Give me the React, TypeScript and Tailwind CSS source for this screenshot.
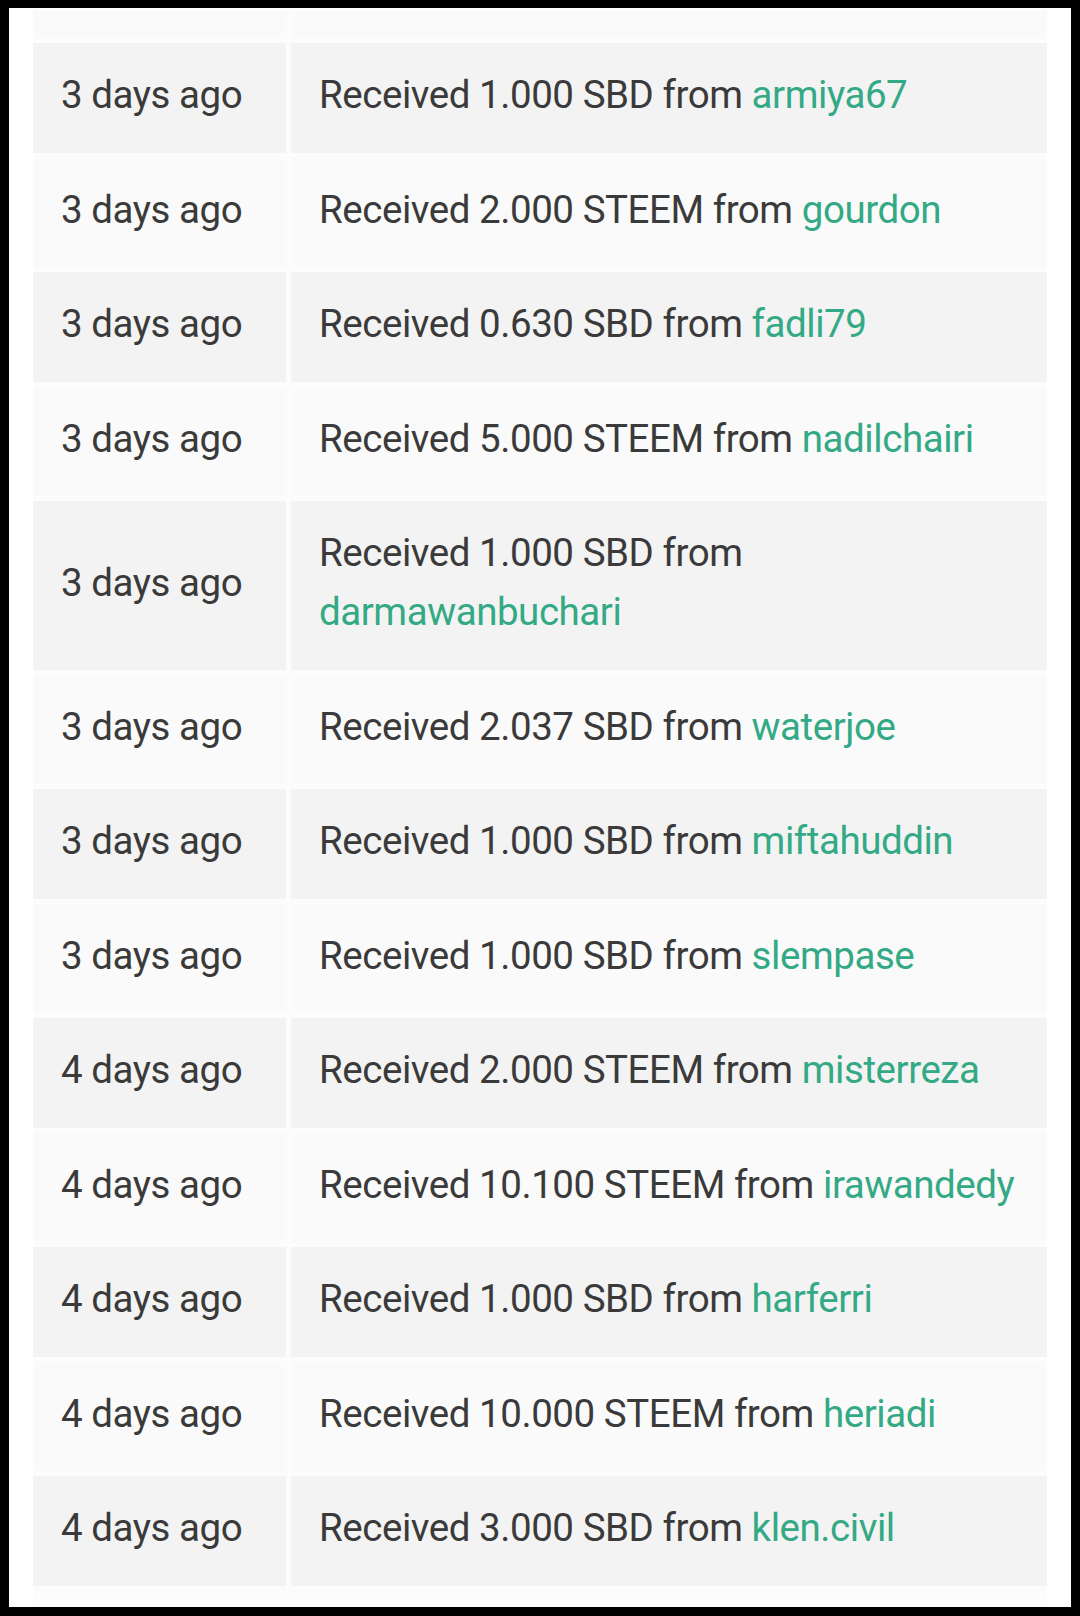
import React from "react";

type Row = { date: string; text: string; user: string; wrap?: boolean };

const rows: Row[] = [
  { date: "3 days ago", text: "Received 1.000 SBD from", user: "armiya67" },
  { date: "3 days ago", text: "Received 2.000 STEEM from", user: "gourdon" },
  { date: "3 days ago", text: "Received 0.630 SBD from", user: "fadli79" },
  { date: "3 days ago", text: "Received 5.000 STEEM from", user: "nadilchairi" },
  { date: "3 days ago", text: "Received 1.000 SBD from", user: "darmawanbuchari", wrap: true },
  { date: "3 days ago", text: "Received 2.037 SBD from", user: "waterjoe" },
  { date: "3 days ago", text: "Received 1.000 SBD from", user: "miftahuddin" },
  { date: "3 days ago", text: "Received 1.000 SBD from", user: "slempase" },
  { date: "4 days ago", text: "Received 2.000 STEEM from", user: "misterreza" },
  { date: "4 days ago", text: "Received 10.100 STEEM from", user: "irawandedy" },
  { date: "4 days ago", text: "Received 1.000 SBD from", user: "harferri" },
  { date: "4 days ago", text: "Received 10.000 STEEM from", user: "heriadi" },
  { date: "4 days ago", text: "Received 3.000 SBD from", user: "klen.civil" },
];

export default function App() {
  return (
    <div
      className="w-[1080px] h-[1616px] bg-black pt-[8px] pl-[9px] overflow-hidden"
      style={{ fontFamily: "Roboto, 'Noto Sans', sans-serif" }}
    >
      <div className="w-[1062px] h-[1599px] bg-white pt-[3px] px-[24px] overflow-hidden">
        <div className="flex flex-col gap-[5px] bg-[#fcfcfc] text-[38.5px] leading-[59px] tracking-[-0.45px] text-[#3a3a3a]">
          <div className="grid grid-cols-[253px_756px] gap-[5px] h-[27px]">
            <div className="bg-[#fafafa]" />
            <div className="bg-[#fafafa]" />
          </div>
          {rows.map((r, i) => {
            const bg = i % 2 === 0 ? "bg-[#f3f3f3]" : "bg-[#fafafa]";
            return (
              <div key={i} className="grid grid-cols-[253px_756px] gap-[5px]">
                <div className={`${bg} flex items-center pl-[28px] pt-[22px] pb-[28.5px]`}>
                  {r.date}
                </div>
                <div className={`${bg} pl-[28px] pr-[20px] pt-[22px] pb-[28.5px]`}>
                  {r.wrap ? (
                    <>
                      <div>{r.text}</div>
                      <div className="text-[#33a985]">{r.user}</div>
                    </>
                  ) : (
                    <span className="whitespace-nowrap">
                      {r.text} <span className="text-[#33a985]">{r.user}</span>
                    </span>
                  )}
                </div>
              </div>
            );
          })}
          <div className="grid grid-cols-[253px_756px] gap-[5px] h-[20px]">
            <div className="bg-[#fcfcfc]" />
            <div className="bg-[#fcfcfc]" />
          </div>
        </div>
      </div>
    </div>
  );
}
